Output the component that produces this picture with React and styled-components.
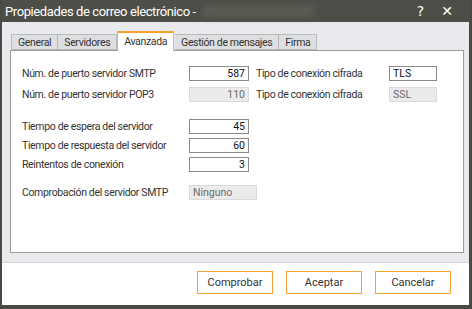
import styled, { createGlobalStyle } from "styled-components"

const GlobalStyle = createGlobalStyle`
  html, body {
    margin: 0;
    padding: 0;
    background: #4a4a44;
  }
  * {
    box-sizing: border-box;
  }
`

const tabs = ["General", "Servidores", "Avanzada", "Gestión de mensajes", "Firma"]

const Field = ({ value, disabled, align = "right", width = 60 }) => (
  <Input disabled={disabled} align={align} width={width}>
    {value}
  </Input>
)

export default function App() {
  return (
    <>
      <GlobalStyle />
      <Window>
        <TitleBar>
          <Title>Propiedades de correo electrónico -</Title>
          <Blurred />
          <TitleButtons>
            <TitleButton>?</TitleButton>
            <TitleButton close>✕</TitleButton>
          </TitleButtons>
        </TitleBar>
        <Body>
          <TabStrip>
            {tabs.map((t) => (
              <Tab key={t} active={t === "Avanzada"}>
                {t}
              </Tab>
            ))}
          </TabStrip>
          <Panel>
            <Group>
              <Row>
                <Label>Núm. de puerto servidor SMTP</Label>
                <Field value="587" />
                <Label>Tipo de conexión cifrada</Label>
                <Field value="TLS" align="left" width={48} />
              </Row>
              <Row>
                <Label>Núm. de puerto servidor POP3</Label>
                <Field value="110" disabled />
                <Label>Tipo de conexión cifrada</Label>
                <Field value="SSL" align="left" width={48} disabled />
              </Row>
            </Group>
            <Group tight>
              <Row>
                <Label>Tiempo de espera del servidor</Label>
                <Field value="45" />
              </Row>
              <Row>
                <Label>Tiempo de respuesta del servidor</Label>
                <Field value="60" />
              </Row>
              <Row>
                <Label>Reintentos de conexión</Label>
                <Field value="3" />
              </Row>
            </Group>
            <Group>
              <Row>
                <Label>Comprobación del servidor SMTP</Label>
                <Field value="Ninguno" align="left" width={68} disabled />
              </Row>
            </Group>
          </Panel>
        </Body>
        <Footer>
          <Button>Comprobar</Button>
          <Button>Aceptar</Button>
          <Button>Cancelar</Button>
        </Footer>
      </Window>
    </>
  )
}

const Window = styled.div`
  width: 472px;
  height: 309px;
  display: flex;
  flex-direction: column;
  background: #4a4a44;
  border-left: 2px solid #4a4a44;
  border-right: 3px solid #4a4a44;
  border-bottom: 4px solid #4a4a44;
  font-family: Roboto, "Noto Sans", sans-serif;
`
const TitleBar = styled.div`
  height: 22px;
  display: flex;
  align-items: center;
  padding-left: 3px;
  background: #4e4e48;
`
const Title = styled.div`
  color: #ffffff;
  font-size: 13px;
  letter-spacing: -0.4px;
`
const Blurred = styled.div`
  width: 112px;
  height: 12px;
  margin-left: 6px;
  background: #5c5c55;
  border-radius: 4px;
  filter: blur(3px);
`
const TitleButtons = styled.div`
  margin-left: auto;
  display: flex;
  align-items: center;
  gap: 17px;
  padding-right: 16px;
`
const TitleButton = styled.span`
  color: #ffffff;
  font-size: 14px;
  font-weight: ${({ close }) => (close ? 700 : 400)};
  font-family: "DejaVu Sans", sans-serif;
`
const Body = styled.div`
  flex: 1;
  background: #e9eaed;
  padding: 9px 5px 9px 8px;
  display: flex;
  flex-direction: column;
  border-bottom: 1px solid #d4d4d4;
`
const TabStrip = styled.div`
  display: flex;
  align-items: flex-end;
  height: 19px;
  padding-left: 1px;
  position: relative;
  z-index: 1;
`
const Tab = styled.div`
  height: ${({ active }) => (active ? "20px" : "16px")};
  margin-bottom: ${({ active }) => (active ? "-1px" : "0")};
  padding: ${({ active }) => (active ? "2px 6px 0" : "1px 6px 0")};
  margin-right: ${({ active }) => (active ? "1px" : "0")};
  font-size: 10.5px;
  letter-spacing: -0.35px;
  line-height: 14px;
  color: #333333;
  background: ${({ active }) => (active ? "#ffffff" : "#dedfe1")};
  border: 1px solid #b9b9b9;
  border-top: ${({ active }) => (active ? "2px solid #f5a030" : "1px solid #b9b9b9")};
  border-bottom: ${({ active }) => (active ? "none" : "1px solid #b9b9b9")};
  border-left: ${({ active }) => (active ? "1px solid #b9b9b9" : "none")};
  &:first-child {
    border-left: 1px solid #b9b9b9;
  }
`
const Panel = styled.div`
  flex: 1;
  background: #ffffff;
  border: 1px solid #9c9c9c;
  padding: 15px 12px 0 11px;
`
const Group = styled.div`
  display: flex;
  flex-direction: column;
  gap: ${({ tight }) => (tight ? "4px" : "6px")};
  margin-bottom: ${({ tight }) => (tight ? "13px" : "17px")};
`
const Row = styled.div`
  display: grid;
  grid-template-columns: 167px 60px 7px 133px 48px;
  align-items: center;
  height: 15px;
  & > :nth-child(3) {
    grid-column: 4;
  }
`
const Label = styled.div`
  font-size: 10.5px;
  letter-spacing: -0.35px;
  color: #333333;
  white-space: nowrap;
`
const Input = styled.div`
  width: ${({ width }) => width}px;
  height: 15px;
  font-size: 10.5px;
  line-height: 13px;
  padding: 0 3px;
  text-align: ${({ align }) => align};
  color: ${({ disabled }) => (disabled ? "#6b6b6b" : "#111111")};
  background: ${({ disabled }) => (disabled ? "#ebebeb" : "#ffffff")};
  border: 1px solid ${({ disabled }) => (disabled ? "#dadada" : "#8a8a8a")};
`
const Footer = styled.div`
  height: 42px;
  background: #ffffff;
  display: flex;
  justify-content: flex-end;
  align-items: flex-start;
  gap: 13px;
  padding: 8px 18px 0 0;
`
const Button = styled.button`
  width: 76px;
  height: 23px;
  font-family: Roboto, "Noto Sans", sans-serif;
  font-size: 11px;
  color: #333333;
  background: #ffffff;
  border: 1px solid #f5a030;
  padding: 0;
`
